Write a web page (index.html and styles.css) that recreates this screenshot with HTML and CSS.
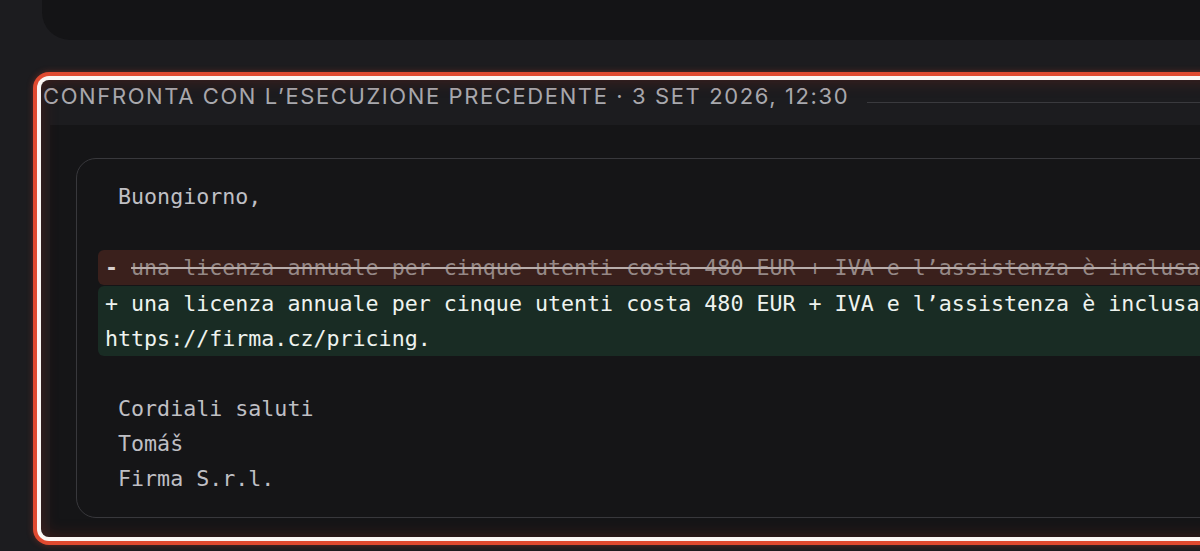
FILE: index.html
```html
<!DOCTYPE html>
<html lang="it">
<head>
<meta charset="utf-8">
<title>Confronta</title>
<link rel="stylesheet" href="styles.css">
</head>
<body>
<div class="page">
  <div class="prev-card"></div>
  <section class="compare">
    <header class="compare-head">
      <h2 class="compare-title">Confronta con l’esecuzione precedente · 3 set 2026, 12:30</h2>
      <div class="compare-rule"></div>
    </header>
    <div class="compare-panel">
      <div class="diff-box">
        <div class="ln ctx"> Buongiorno,</div>
        <div class="ln ctx"> </div>
        <div class="ln del"><span class="sign">-</span> <span class="strike">una licenza annuale per cinque utenti costa 480 EUR + IVA e l’assistenza è inclusa</span></div>
        <div class="ln add">+ una licenza annuale per cinque utenti costa 480 EUR + IVA e l’assistenza è inclusa
https://firma.cz/pricing.</div>
        <div class="ln ctx"> </div>
        <div class="ln ctx"> Cordiali saluti</div>
        <div class="ln ctx"> Tomáš</div>
        <div class="ln ctx"> Firma S.r.l.</div>
      </div>
    </div>
  </section>
</div>
</body>
</html>
```

FILE: styles.css
```css
html, body {
  margin: 0;
  padding: 0;
  background: #1c1c1f;
  overflow: hidden;
  height: 551px;
}

.page {
  width: 1700px;
  padding-left: 41px;
  display: flex;
  flex-direction: column;
}

.prev-card {
  margin-left: 1px;
  height: 40px;
  background: #141416;
  border-radius: 0 0 0 28px;
}

.compare {
  margin-top: 40px;
  height: 457px;
  border-radius: 8px;
  background: #1c1c1f;
  box-shadow: 0 0 0 4px #fbf6f4, 0 0 0 8px #e04a30, 0 0 6px 8px rgba(224, 74, 48, 0.35);
  position: relative;
  overflow: hidden;
  display: flex;
  flex-direction: column;
}

.compare::after {
  content: "";
  position: absolute;
  inset: 0;
  border-radius: 8px;
  box-shadow: inset 0 0 16px rgba(150, 40, 25, 0.35);
  pointer-events: none;
}

.compare-head {
  display: flex;
  align-items: center;
  height: 32px;
  padding: 0 0 0 2px;
  margin-bottom: 13px;
  gap: 18px;
}

.compare-title {
  margin: 0;
  font-family: Inter, "Noto Sans", sans-serif;
  font-weight: 400;
  font-size: 22px;
  letter-spacing: 0.073em;
  text-transform: uppercase;
  color: #a9a9ae;
  white-space: nowrap;
}

.compare-rule {
  flex: 1;
  height: 1px;
  background: #3a3a3e;
  margin-top: 12px;
}

.compare-panel {
  flex: 1;
  margin-left: 9px;
  background: #151517;
  padding: 33px 0 0 26px;
}

.diff-box {
  width: 1550px;
  border: 1px solid #38383c;
  border-radius: 20px;
  padding: 20px 0 21px 21px;
  font-family: "DejaVu Sans Mono", "Liberation Mono", monospace;
  font-size: 21.65px;
  line-height: 35px;
  color: #bfbfc4;
}

.ln {
  white-space: pre;
  width: 1480px;
  padding-left: 7px;
  min-height: 35px;
}

.del {
  background: #3a201c;
  border-radius: 6px;
  color: #958886;
  margin: 1px 0;
}

.del .sign {
  color: #d8d0ce;
  font-weight: 700;
}

.strike {
  text-decoration: line-through;
  text-decoration-color: #b8adab;
}

.add {
  background: #192c24;
  border-radius: 6px;
  color: #eef3ef;
}
```
